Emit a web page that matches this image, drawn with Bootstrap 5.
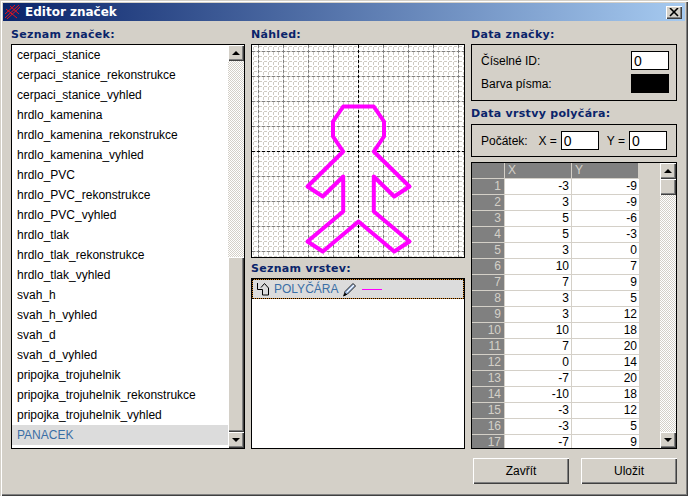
<!DOCTYPE html>
<html lang="cs">
  <head>
    <meta charset="UTF-8" />
    <meta name="viewport" content="width=device-width, initial-scale=1.0" />
    <title>Editor značek</title>
    <link href="https://cdn.jsdelivr.net/npm/bootstrap@5.3.2/dist/css/bootstrap.min.css" rel="stylesheet" />
    <style>
      body { width: 688px; height: 496px; overflow: hidden; background: #d4d0c8; color: #000; font: 12px/1 "Liberation Sans", sans-serif; }
      .win { width: 688px; height: 496px; padding: 3px 3px 3px 3px; box-shadow: inset 1px 1px #d4d0c8, inset 2px 2px #fff, inset -1px -1px #404040, inset -2px -2px #808080; }
      .win-title { height: 18px; padding: 0 3px 0 1px; background: linear-gradient(90deg, #0a246a, #a6caf0); color: #fff; font: bold 12px "DejaVu Sans", sans-serif; }
      .win-btn { width: 16px; height: 13px; background: #d4d0c8; box-shadow: inset 1px 1px #fff, inset -1px -1px #404040, inset -2px -2px #808080; }
      .win-main { padding: 7px 8px 0 8px; gap: 6px; }
      .col-left { width: 235px; }
      .col-mid { width: 214px; }
      .col-right { width: 207px; }
      .head-label { height: 16px; color: #0a246a; font: bold 11px/14px "DejaVu Sans", sans-serif; letter-spacing: .3px; }
      .head-gap { height: 20px; padding-top: 4px; }
      .head-gap2 { height: 23px; padding-top: 6px; }
      .frame { border: 1px solid #000; }
      .list-box { height: 405px; background: #fff; }
      .sym-list { width: 216px; margin: 0; padding: 0; list-style: none; }
      .sym-list li { height: 20px; line-height: 20px; padding-left: 5px; }
      .sym-list li.active-sym { background: #dcdcdc; color: #3a6ea5; }
      .sbar { width: 16px; background: repeating-conic-gradient(#d4d0c8 0 25%, #fff 0 50%) 0 0 / 2px 2px; }
      .sbar-btn, .sbar-thumb { background: #d4d0c8; box-shadow: inset 1px 1px #fff, inset -1px -1px #404040, inset -2px -2px #808080; }
      .sbar-btn { height: 16px; }
      .arrow-up { width: 0; height: 0; border: 4px solid transparent; border-top: 0; border-bottom-color: #000; }
      .arrow-down { width: 0; height: 0; border: 4px solid transparent; border-bottom: 0; border-top-color: #000; }
      .sbar-gap-a { height: 197px; }
      .sbar-gap-b { height: 16px; }
      .thumb-a { height: 176px; }
      .preview { width: 214px; height: 214px; background: #fff; }
      .preview svg { display: block; }
      .layers { height: 171px; background: #fff; }
      .layer-focus { background: #d98a2b; }
      .layer-row { height: 20px; border: 1px dotted #000; background: #dcdcdc; background-clip: padding-box; padding-left: 3px; color: #3a6ea5; }
      .layer-line { width: 20px; height: 1px; margin-left: 5px; background: #f0f; }
      .data-box { height: 57px; padding: 6px 7px 0 9px; }
      .pos-box { height: 33px; padding: 0 9px; }
      .val-input.form-control { width: 38px; height: 19px; min-height: 0; padding: 0 2px; border: 1px solid #000; border-radius: 0; font: 14px/1 "Liberation Sans", sans-serif; color: #000; box-shadow: none; }
      .color-well { width: 38px; height: 19px; background: #000; }
      .grid-box { height: 287px; margin-top: 5px; }
      .grid-clip { width: 167px; height: 285px; overflow: hidden; }
      .grid-tbl.table { width: 167px; margin: 0; table-layout: fixed; border-collapse: separate; border-spacing: 0; --bs-table-bg: #fff; color: #000; }
      .grid-tbl th, .grid-tbl td { height: 16px; padding: 0 2px 0 0; border: 0; border-right: 1px solid #d4d0c8; border-bottom: 1px solid #d4d0c8; font-weight: 400; font-size: 12px; line-height: 15px; text-align: right; }
      .grid-tbl thead th { background: #808080; color: #d4d0c8; text-align: left; padding-left: 3px; }
      .grid-tbl tbody th { background: #808080; color: #d4d0c8; padding-right: 3px; }
      .grid-tbl tbody td:last-child { border-right: 0; }
      .sbar-side { margin-left: 21px; }
      .thumb-b { height: 16px; }
      .act-row { margin-top: 9px; padding-left: 2px; gap: 12px; }
      .act-btn.btn { width: 96px; height: 26px; padding: 0; border: 0; border-radius: 0; background: #d4d0c8; color: #000; font: 12px "Liberation Sans", sans-serif; box-shadow: inset 1px 1px #fff, inset -1px -1px #404040, inset -2px -2px #808080; }
    </style>
  </head>
  <body>
    <div class="win d-flex flex-column">
      <div class="win-title d-flex align-items-center">
        <svg width="17" height="16" viewBox="0 0 17 16" class="me-1">
          <g stroke="#e8141c" fill="none">
            <path d="M1 14 L15 1" />
            <path d="M3 15 L16 3" />
            <path d="M1 10 L11 1" />
            <path d="M2 5 L13 14" />
            <path d="M6 2 L15 10" />
          </g>
        </svg>
        <span>Editor značek</span>
        <div class="win-btn ms-auto d-flex align-items-center justify-content-center">
          <svg width="10" height="9" viewBox="0 0 10 9"><path d="M1 0 L9 8 M9 0 L1 8" stroke="#000" stroke-width="1.6" /></svg>
        </div>
      </div>

      <div class="win-main d-flex">
        <div class="col-left">
          <div class="head-label">Seznam značek:</div>
          <div class="list-box frame d-flex justify-content-between">
            <ul class="sym-list">
              <li>cerpaci_stanice</li>
              <li>cerpaci_stanice_rekonstrukce</li>
              <li>cerpaci_stanice_vyhled</li>
              <li>hrdlo_kamenina</li>
              <li>hrdlo_kamenina_rekonstrukce</li>
              <li>hrdlo_kamenina_vyhled</li>
              <li>hrdlo_PVC</li>
              <li>hrdlo_PVC_rekonstrukce</li>
              <li>hrdlo_PVC_vyhled</li>
              <li>hrdlo_tlak</li>
              <li>hrdlo_tlak_rekonstrukce</li>
              <li>hrdlo_tlak_vyhled</li>
              <li>svah_h</li>
              <li>svah_h_vyhled</li>
              <li>svah_d</li>
              <li>svah_d_vyhled</li>
              <li>pripojka_trojuhelnik</li>
              <li>pripojka_trojuhelnik_rekonstrukce</li>
              <li>pripojka_trojuhelnik_vyhled</li>
              <li class="active-sym">PANACEK</li>
            </ul>
            <div class="sbar d-flex flex-column">
              <div class="sbar-btn d-flex align-items-center justify-content-center"><div class="arrow-up"></div></div>
              <div class="sbar-gap-a"></div>
              <div class="sbar-thumb thumb-a"></div>
              <div class="sbar-btn mt-auto d-flex align-items-center justify-content-center"><div class="arrow-down"></div></div>
            </div>
          </div>
        </div>

        <div class="col-mid">
          <div class="head-label">Náhled:</div>
          <div class="preview frame">
            <svg width="212" height="212" viewBox="0 0 212 212">
              <defs>
                <pattern id="gridMinor" width="5" height="5" patternUnits="userSpaceOnUse">
                  <rect x="2" y="1" width="3" height="1" fill="#cfcbc3" />
                  <rect x="1" y="2" width="1" height="3" fill="#cfcbc3" />
                </pattern>
                <pattern id="gridMajor" width="25" height="25" patternUnits="userSpaceOnUse">
                  <path d="M0 6h3v1h-3z M5 6h3v1h-3z M10 6h3v1h-3z M15 6h3v1h-3z M20 6h3v1h-3z M6 0h1v3h-1z M6 5h1v3h-1z M6 10h1v3h-1z M6 15h1v3h-1z M6 20h1v3h-1z" fill="#808080" />
                </pattern>
              </defs>
              <g shape-rendering="crispEdges">
                <rect width="212" height="212" fill="url(#gridMinor)" />
                <rect width="212" height="212" fill="url(#gridMajor)" />
                <path d="M0 106.5H212 M106.5 0V212" stroke="#000" stroke-dasharray="3 2" />
              </g>
              <polygon fill="none" stroke="#f0f" stroke-width="4" stroke-linejoin="round"
                points="91.2,61.5 121.8,61.5 132,76.5 132,91.5 121.8,106.5 157.5,141.5 142.2,151.5 121.8,131.5 121.8,166.5 157.5,196.5 142.2,206.5 106.5,176.5 70.8,206.5 55.5,196.5 91.2,166.5 91.2,131.5 70.8,151.5 55.5,141.5 91.2,106.5 81,91.5 81,76.5" />
            </svg>
          </div>
          <div class="head-label head-gap">Seznam vrstev:</div>
          <div class="layers frame">
            <div class="layer-focus">
              <div class="layer-row d-flex align-items-center">
                <svg width="14" height="14" viewBox="0 0 14 14" class="me-1 flex-shrink-0">
                  <path d="M1.5 1v6.5h5v5.5h6V6L8.5 1.5 5 5.5" fill="none" stroke="#000" />
                </svg>
                <span>POLYČÁRA</span>
                <svg width="15" height="16" viewBox="0 0 15 16" class="ms-1 flex-shrink-0">
                  <path d="M3 10.5L11 2.5l2.5 2.5-8 8L2 14z" fill="#a9c4ec" stroke="#1c1c1c" />
                  <path d="M5 11L12 4" stroke="#fff" />
                  <path d="M1.5 15L3.5 12.5 4.5 13.5z" fill="#000" stroke="#000" />
                </svg>
                <span class="layer-line"></span>
              </div>
            </div>
          </div>
        </div>

        <div class="col-right">
          <div class="head-label">Data značky:</div>
          <div class="data-box frame">
            <div class="d-flex align-items-center justify-content-between mb-1">
              <span>Číselné ID:</span>
              <input class="val-input form-control" type="text" value="0" />
            </div>
            <div class="d-flex align-items-center justify-content-between">
              <span>Barva písma:</span>
              <div class="color-well"></div>
            </div>
          </div>
          <div class="head-label head-gap2">Data vrstvy polyčára:</div>
          <div class="pos-box frame d-flex align-items-center">
            <span>Počátek:</span>
            <span class="ms-auto me-1">X =</span>
            <input class="val-input form-control" type="text" value="0" />
            <span class="ms-2 me-1">Y =</span>
            <input class="val-input form-control" type="text" value="0" />
          </div>
          <div class="grid-box frame d-flex">
            <div class="grid-clip">
              <table class="grid-tbl table">
                <colgroup><col style="width:33px" /><col style="width:67px" /><col style="width:67px" /></colgroup>
                <thead><tr><th></th><th>X</th><th>Y</th></tr></thead>
                <tbody>
                  <tr><th>1</th><td>-3</td><td>-9</td></tr>
                  <tr><th>2</th><td>3</td><td>-9</td></tr>
                  <tr><th>3</th><td>5</td><td>-6</td></tr>
                  <tr><th>4</th><td>5</td><td>-3</td></tr>
                  <tr><th>5</th><td>3</td><td>0</td></tr>
                  <tr><th>6</th><td>10</td><td>7</td></tr>
                  <tr><th>7</th><td>7</td><td>9</td></tr>
                  <tr><th>8</th><td>3</td><td>5</td></tr>
                  <tr><th>9</th><td>3</td><td>12</td></tr>
                  <tr><th>10</th><td>10</td><td>18</td></tr>
                  <tr><th>11</th><td>7</td><td>20</td></tr>
                  <tr><th>12</th><td>0</td><td>14</td></tr>
                  <tr><th>13</th><td>-7</td><td>20</td></tr>
                  <tr><th>14</th><td>-10</td><td>18</td></tr>
                  <tr><th>15</th><td>-3</td><td>12</td></tr>
                  <tr><th>16</th><td>-3</td><td>5</td></tr>
                  <tr><th>17</th><td>-7</td><td>9</td></tr>
                </tbody>
              </table>
            </div>
            <div class="sbar sbar-side d-flex flex-column">
              <div class="sbar-btn d-flex align-items-center justify-content-center"><div class="arrow-up"></div></div>
              <div class="sbar-thumb thumb-b"></div>
              <div class="sbar-btn mt-auto d-flex align-items-center justify-content-center"><div class="arrow-down"></div></div>
            </div>
          </div>
          <div class="act-row d-flex">
            <button type="button" class="act-btn btn">Zavřít</button>
            <button type="button" class="act-btn btn">Uložit</button>
          </div>
        </div>
      </div>
    </div>
    <script src="https://cdn.jsdelivr.net/npm/bootstrap@5.3.2/dist/js/bootstrap.bundle.min.js"></script>
  </body>
</html>
